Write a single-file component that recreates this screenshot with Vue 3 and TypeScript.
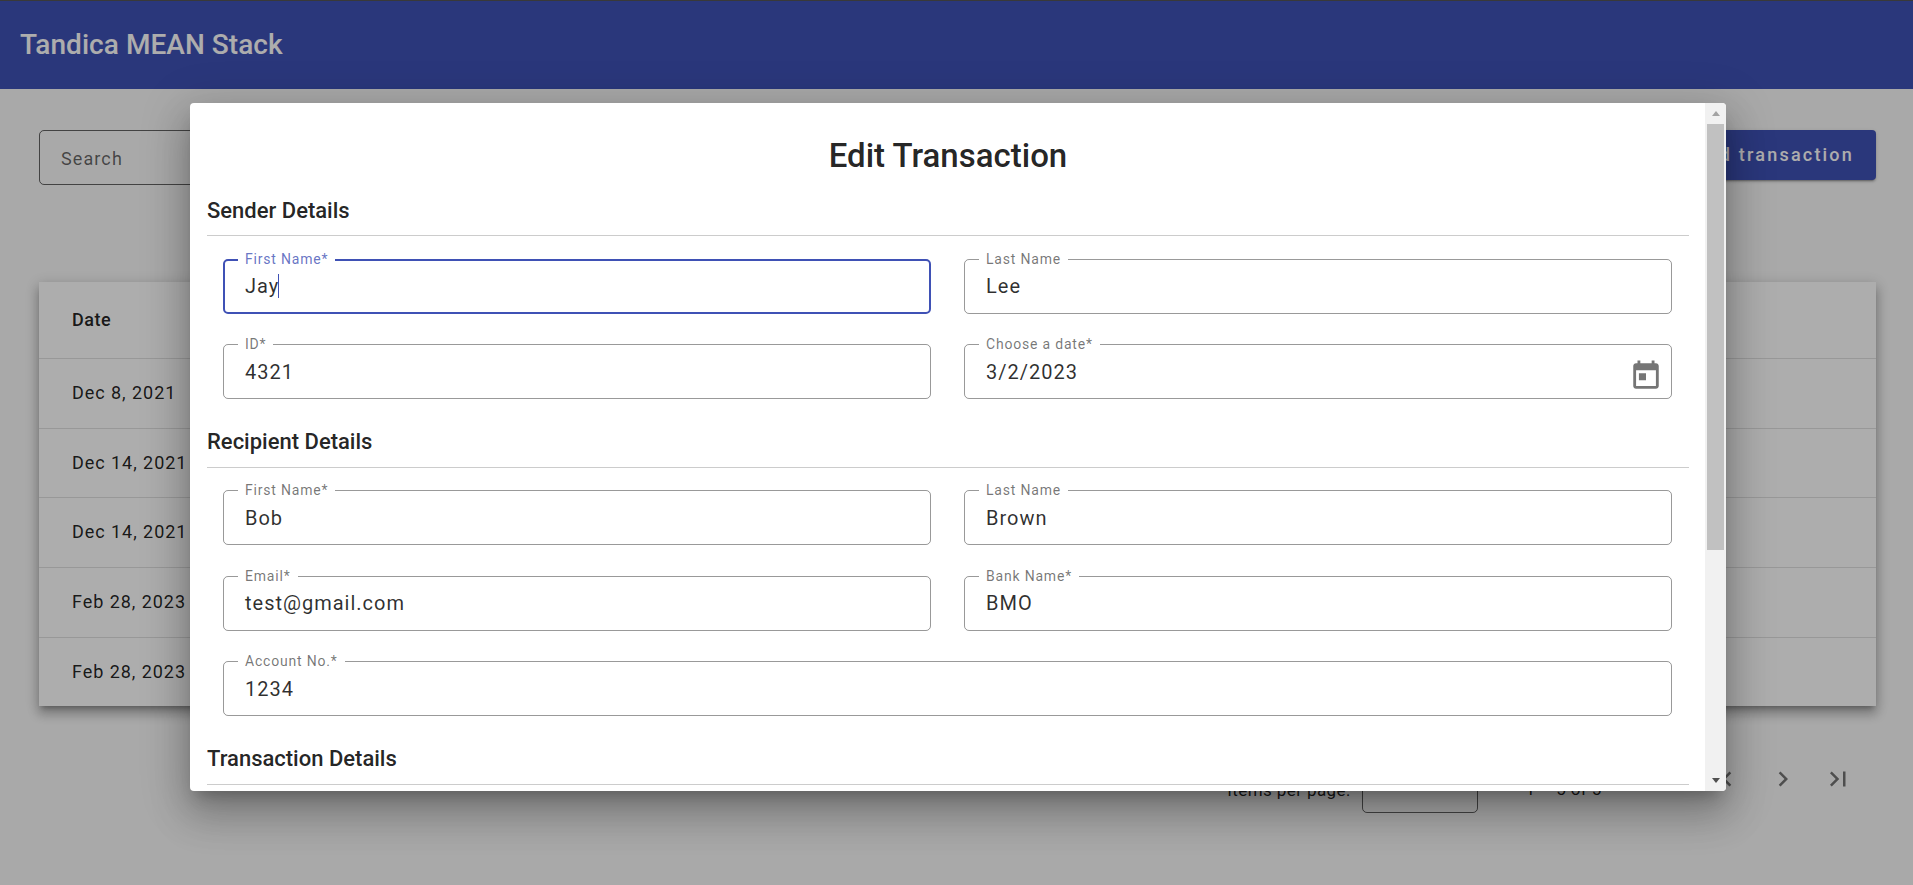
<script setup lang="ts">
interface Field { label: string; value: string; focus?: boolean; date?: boolean; wide?: boolean }
interface Section { title: string; fields: Field[] }

const sections: Section[] = [
  {
    title: 'Sender Details',
    fields: [
      { label: 'First Name*', value: 'Jay', focus: true },
      { label: 'Last Name', value: 'Lee' },
      { label: 'ID*', value: '4321' },
      { label: 'Choose a date*', value: '3/2/2023', date: true },
    ],
  },
  {
    title: 'Recipient Details',
    fields: [
      { label: 'First Name*', value: 'Bob' },
      { label: 'Last Name', value: 'Brown' },
      { label: 'Email*', value: 'test@gmail.com' },
      { label: 'Bank Name*', value: 'BMO' },
      { label: 'Account No.*', value: '1234', wide: true },
    ],
  },
  { title: 'Transaction Details', fields: [] },
]

const dates = ['Dec 8, 2021', 'Dec 14, 2021', 'Dec 14, 2021', 'Feb 28, 2023', 'Feb 28, 2023']
</script>

<template>
  <div class="app">
    <header class="toolbar">Tandica MEAN Stack</header>
    <main class="page">
      <div class="actions">
        <div class="search">Search</div>
        <button class="add" type="button">Add transaction</button>
      </div>
      <div class="table">
        <div class="row head">Date</div>
        <div v-for="(d, i) in dates" :key="i" class="row">{{ d }}</div>
      </div>
      <div class="paginator">
        <span class="per">Items per page:</span>
        <div class="select">5</div>
        <span class="range">1 – 5 of 5</span>
        <svg class="pg first" viewBox="0 0 24 24"><path d="M18.41 16.59L13.82 12l4.59-4.59L17 6l-6 6 6 6zM6 6h2v12H6z" /></svg>
        <svg class="pg" viewBox="0 0 24 24"><path d="M15.41 7.41L14 6l-6 6 6 6 1.41-1.41L10.83 12z" /></svg>
        <svg class="pg" viewBox="0 0 24 24"><path d="M10 6L8.59 7.41 13.17 12l-4.58 4.59L10 18l6-6z" /></svg>
        <svg class="pg" viewBox="0 0 24 24"><path d="M5.59 7.41L10.18 12l-4.58 4.59L7 18l6-6-6-6zM16 6h2v12h-2z" /></svg>
      </div>
    </main>

    <div class="backdrop"></div>
    <div class="dialog">
      <div class="content">
        <h1 class="title">Edit Transaction</h1>
        <section v-for="s in sections" :key="s.title" class="section">
          <h2 class="section-title">{{ s.title }}</h2>
          <div v-if="s.fields.length" class="grid">
            <div
              v-for="f in s.fields"
              :key="f.label + f.value"
              class="field"
              :class="{ focus: f.focus, wide: f.wide }"
            >
              <span class="label">{{ f.label }}</span>
              <span class="value">{{ f.value }}<i v-if="f.focus" class="caret"></i></span>
              <svg v-if="f.date" class="cal" viewBox="0 0 24 24">
                <path d="M19 3h-1V1h-2v2H8V1H6v2H5c-1.11 0-1.99.9-1.99 2L3 19c0 1.1.89 2 2 2h14c1.1 0 2-.9 2-2V5c0-1.1-.9-2-2-2zm0 16H5V8h14v11zM7 10h5v5H7z" />
              </svg>
            </div>
          </div>
        </section>
      </div>
      <div class="scrollbar">
        <div class="arrow"><i class="tri up"></i></div>
        <div class="thumb"></div>
        <div class="rest"></div>
        <div class="arrow"><i class="tri down"></i></div>
      </div>
    </div>
  </div>
</template>

<style>
html, body { margin: 0; padding: 0; background: #fafafa; }
</style>

<style scoped>
.app {
  height: 885px;
  overflow: hidden;
  position: relative;
  font-family: Roboto, "Liberation Sans", sans-serif;
  color: rgba(0, 0, 0, .87);
  background: #fafafa;
}
.toolbar {
  height: 89px;
  box-sizing: border-box;
  border-top: 1px solid #555;
  padding: 0 0 2px 20px;
  display: flex;
  align-items: center;
  background: #3f51b5;
  color: #fff;
  font-size: 28px;
  font-weight: 500;
  letter-spacing: .05px;
}
.page { padding: 41px 37px 0 39px; }
.actions { display: flex; justify-content: space-between; align-items: flex-start; height: 152px; }
.search {
  width: 600px;
  height: 55px;
  box-sizing: border-box;
  border: 1px solid rgba(0, 0, 0, .6);
  border-radius: 5px;
  padding: 2px 0 0 21px;
  display: flex;
  align-items: center;
  font-size: 18px;
  letter-spacing: 1.1px;
  color: rgba(0, 0, 0, .6);
}
.add {
  height: 50px;
  padding: 0 22px 2px;
  border: 0;
  border-radius: 4px;
  background: #3f51b5;
  color: #fff;
  font: 500 18px Roboto, sans-serif;
  letter-spacing: 2.2px;
  box-shadow: 0 3px 1px -2px rgba(0,0,0,.2), 0 2px 2px 0 rgba(0,0,0,.14), 0 1px 5px 0 rgba(0,0,0,.12);
}
.table {
  background: #fff;
  box-shadow: 0 5px 5px -3px rgba(0,0,0,.25), 0 8px 10px 1px rgba(0,0,0,.18), 0 3px 14px 2px rgba(0,0,0,.15);
}
.row {
  height: 69.7px;
  box-sizing: border-box;
  padding: 0 0 2px 33px;
  display: flex;
  align-items: center;
  font-size: 18px;
  letter-spacing: .95px;
  border-top: 1px solid rgba(0, 0, 0, .12);
}
.row.head { height: 76px; border-top: 0; font-weight: 500; font-size: 18px; letter-spacing: .5px; }
.paginator {
  display: flex;
  align-items: center;
  justify-content: flex-end;
  height: 63px;
  margin-top: 44px;
  padding-right: 10px;
  font-size: 17px;
  letter-spacing: .4px;
}
.per { margin-right: 12px; margin-top: 16px; }
.select {
  width: 116px;
  height: 63px;
  box-sizing: border-box;
  border: 1px solid rgba(0, 0, 0, .6);
  border-radius: 5px;
  padding: 13px 0 0 20px;
  margin-right: 54px;
}
.range { margin-top: 14px; margin-right: 55px; margin-left: -7px; }
.pg { width: 30px; height: 30px; fill: rgba(0, 0, 0, .54); margin: -5px 12.75px 0; }
.pg.first { margin-left: 0; }

.backdrop {
  position: absolute;
  inset: 0;
  background: rgba(0, 0, 0, .32);
}
.dialog {
  position: absolute;
  left: 190px;
  top: 103px;
  width: 1536px;
  height: 688px;
  display: flex;
  background: #fff;
  border-radius: 4px;
  box-shadow: 0 11px 15px -7px rgba(0,0,0,.25), 0 24px 38px 3px rgba(0,0,0,.18), 0 9px 46px 8px rgba(0,0,0,.15);
}
.content {
  flex: 1;
  min-width: 0;
  overflow: hidden;
  padding: 25px 16px 0 17px;
}
.title {
  margin: 0;
  text-align: center;
  font-size: 33px;
  line-height: 56px;
  font-weight: 500;
  color: rgba(0, 0, 0, .87);
}
.section { padding-bottom: 26px; }
.section:first-of-type { margin-top: 9.9px; }
.section-title {
  margin: 0;
  height: 42.5px;
  box-sizing: border-box;
  border-bottom: 1px solid rgba(0, 0, 0, .2);
  font-size: 22px;
  line-height: 34px;
  font-weight: 500;
}
.grid {
  display: grid;
  grid-template-columns: 1fr 1fr;
  column-gap: 33px;
  row-gap: 30.5px;
  padding: 22.5px 17px 0 16px;
}
.field {
  position: relative;
  height: 55px;
  box-sizing: border-box;
  border: 1px solid rgba(0, 0, 0, .4);
  border-radius: 5px;
  padding-left: 21px;
  display: flex;
  align-items: center;
}
.field.wide { grid-column: 1 / -1; }
.field.focus { border: 2px solid #3f51b5; padding-left: 20px; }
.label {
  position: absolute;
  left: 14px;
  top: -8px;
  padding: 0 7px;
  background: #fff;
  font-size: 14px;
  line-height: 15px;
  letter-spacing: .8px;
  color: rgba(0, 0, 0, .55);
}
.focus .label { color: rgba(63, 81, 181, .8); top: -9px; left: 13px; }
.value {
  font-size: 20px;
  letter-spacing: 1px;
  color: rgba(0, 0, 0, .82);
}
.caret {
  display: inline-block;
  width: 1px;
  height: 24px;
  margin-left: -1px;
  vertical-align: -5px;
  background: #3f51b5;
}
.cal {
  position: absolute;
  right: 8px;
  top: 14px;
  width: 34px;
  height: 34px;
  fill: #757575;
}
.scrollbar {
  width: 21px;
  flex: none;
  display: flex;
  flex-direction: column;
  align-items: center;
  background: #f1f1f1;
  border-radius: 0 4px 4px 0;
}
.arrow { height: 21px; flex: none; display: flex; align-items: center; justify-content: center; }
.thumb { width: 17px; height: 426px; flex: none; background: #c1c1c1; }
.rest { flex: 1; }
.tri { width: 0; height: 0; border-left: 4px solid transparent; border-right: 4px solid transparent; }
.tri.up { border-bottom: 5px solid #a3a3a3; }
.tri.down { border-top: 5px solid #505050; }
</style>
